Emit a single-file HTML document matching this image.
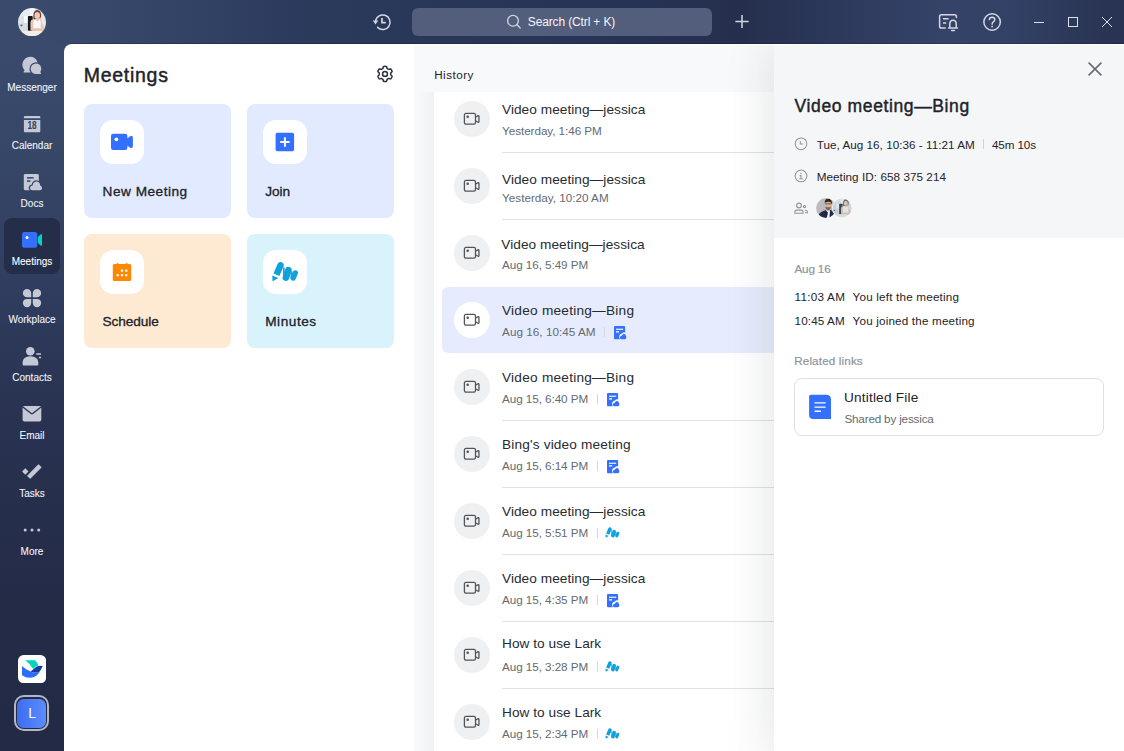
<!DOCTYPE html>
<html lang="en">
<head>
<meta charset="utf-8">
<title>Meetings</title>
<style>
*{box-sizing:border-box;margin:0;padding:0}
html,body{width:1124px;height:751px;overflow:hidden}
body{position:relative;font-family:"Liberation Sans","DejaVu Sans",sans-serif;color:#1f2329;background:#2a3557}
.abs,.tx,svg{position:absolute}
.tx{white-space:nowrap}
#bg{left:0;top:0;width:1124px;height:751px;background:linear-gradient(180deg,#3a4a6d 0%,#3a4a6d 7%,#374767 20%,#303d5f 38%,#2a3453 52%,#262f4c 66%,#232b47 80%,#222a45 100%)}
#top{left:0;top:0;width:1124px;height:44px;background:linear-gradient(90deg,rgba(58,74,109,0) 0%,rgba(58,74,109,0) 4%,#364669 12%,#2c3b5d 26%,#293758 36%,#273457 52%,#252f4d 66%,#2e3b5e 76%,#354369 84%,#334167 90%,#2c3858 96%,#283252 100%)}
.lbl{left:0;width:64px;text-align:center;font-size:10px;line-height:12px;color:#eceff6}
#act{left:4px;top:218px;width:56px;height:56px;border-radius:8px;background:#252e48}
#search{left:412px;top:8px;width:300px;height:28px;border-radius:6px;background:#535d7c}
#main{left:64px;top:44px;width:1060px;height:707px;background:#fff;border-top-left-radius:8px}
#mid{left:414px;top:44px;width:360px;height:707px;background:#f8f9fa}
#gut{left:414px;top:92px;width:20px;height:659px;background:linear-gradient(90deg,#f8f9fa 0%,#f7f8f9 25%,#f1f2f4 100%)}
#list{left:434px;top:92px;width:340px;height:659px;background:#fff}
#shade{left:414px;top:45px;width:360px;height:706px;overflow:hidden;pointer-events:none}
#shade i{position:absolute;left:360px;top:2px;width:60px;height:712px;box-shadow:0 0 50px 2px rgba(31,35,41,.13)}
#right{left:774px;top:44px;width:350px;height:707px;background:#fff}
#rhead{left:774px;top:44px;width:350px;height:194px;background:#f5f6f7}
#topline{left:72px;top:44px;width:1052px;height:1px;background:#fff}
#topdark{left:70px;top:43px;width:1054px;height:1px;background:rgba(10,16,40,.28)}
.card{width:147px;height:114px;border-radius:8px}
.ib{width:44px;height:44px;border-radius:13px;background:#fff}
.sel{left:442px;width:332px;height:66px;background:#e6ecfd;border-radius:6px 0 0 6px}
.av{left:454px;width:36px;height:36px;border-radius:50%;background:#eff0f1}
.av.w{background:#fff}
.ln{left:502px;width:272px;height:1px;background:#e1e2e5}
.bar{width:1px;height:10px;background:#d5d7da}
#fcard{left:794px;top:378px;width:310px;height:58px;border:1px solid #dee0e3;border-radius:8px;background:#fff}
</style>
</head>
<body>
<div id="bg" class="abs"></div>
<div id="top" class="abs"></div>

<svg style="left:18px;top:7.8px" width="28" height="28.4" viewBox="0 0 28 28.4">
<clipPath id="avc"><ellipse cx="14" cy="14.2" rx="14" ry="14.2"/></clipPath>
<filter id="avb" x="-10%" y="-10%" width="120%" height="120%"><feGaussianBlur stdDeviation="0.6"/></filter>
<g clip-path="url(#avc)"><g filter="url(#avb)">
<rect x="-2" y="-2" width="32" height="33" fill="#dfe6e9"/>
<rect x="-2" y="-2" width="17" height="10" fill="#e8edf0"/>
<rect x="12" y="0" width="5" height="9" fill="#f6f8fa"/>
<rect x="5.6" y="8" width="4.2" height="7.4" fill="#fafbfc"/>
<rect x="4.6" y="7.6" width="0.8" height="8" fill="#cfd6da"/>
<rect x="-2" y="15" width="12" height="8" fill="#d5dee2"/>
<rect x="2.4" y="16.6" width="2" height="1.6" fill="#59646d"/>
<rect x="23" y="2" width="7" height="21" fill="#e2e9ed"/>
<rect x="9.9" y="8" width="4.8" height="14.8" rx="0.8" fill="#16191d"/>
<path d="M15.4 10.8 Q14.4 3.2 18.6 1.9 Q23.4 1.6 23.2 8 L22.8 11 L16 11.4 Z" fill="#6a4034"/>
<ellipse cx="19.2" cy="7.5" rx="2.8" ry="3.5" fill="#ecc9b9"/>
<path d="M14.6 22.8 Q13.8 14 16.6 11.4 L22.6 11 Q25.6 13.6 25 22.8 Z" fill="#f7f7f8"/>
<path d="M18.2 10.4 L20.6 10.4 L20.8 12.6 Q19.4 13.6 18 12.4 Z" fill="#e7c1b0"/>
<path d="M12.4 15 Q12.6 11.6 15 11.6 Q15.8 12.4 15.4 15 L15.2 22.6 L12.6 22.6 Z" fill="#e9c4b3"/>
<path d="M21 10.6 Q23 8.6 23.8 10.4 Q24.2 11.6 23.2 12.6 L26.4 19.4 Q26.6 22 24.6 22.6 L22.6 21.6 L22.8 14 Z" fill="#ebc7b6"/>
<path d="M14.6 20.6 Q20 19.8 25 20.8 L25 23.2 L14.6 23.2 Z" fill="#e6bfae"/>
<rect x="-2" y="22.9" width="32" height="7" fill="#f2ede5"/>
</g></g></svg>
<div id="act" class="abs"></div>
<div id="sb0" class="tx" style="left:0.6px;top:82.00px;font-size:10px;line-height:12px;color:#f4f6fb;left:0;width:64px;text-align:center;-webkit-text-stroke:0.08px #f4f6fb;">Messenger</div>
<div id="sb1" class="tx" style="left:0.6px;top:140.00px;font-size:10px;line-height:12px;color:#f4f6fb;left:0;width:64px;text-align:center;-webkit-text-stroke:0.08px #f4f6fb;">Calendar</div>
<div id="sb2" class="tx" style="left:0.6px;top:198.00px;font-size:10px;line-height:12px;color:#f4f6fb;left:0;width:64px;text-align:center;-webkit-text-stroke:0.08px #f4f6fb;">Docs</div>
<div id="sb3" class="tx" style="left:0.6px;top:256.00px;font-size:10px;line-height:12px;color:#ffffff;left:0;width:64px;text-align:center;-webkit-text-stroke:0.08px #ffffff;">Meetings</div>
<div id="sb4" class="tx" style="left:0.6px;top:314.00px;font-size:10px;line-height:12px;color:#f4f6fb;left:0;width:64px;text-align:center;-webkit-text-stroke:0.08px #f4f6fb;">Workplace</div>
<div id="sb5" class="tx" style="left:0.6px;top:372.00px;font-size:10px;line-height:12px;color:#f4f6fb;left:0;width:64px;text-align:center;-webkit-text-stroke:0.08px #f4f6fb;">Contacts</div>
<div id="sb6" class="tx" style="left:0.6px;top:430.00px;font-size:10px;line-height:12px;color:#f4f6fb;left:0;width:64px;text-align:center;-webkit-text-stroke:0.08px #f4f6fb;">Email</div>
<div id="sb7" class="tx" style="left:0.6px;top:488.00px;font-size:10px;line-height:12px;color:#f4f6fb;left:0;width:64px;text-align:center;-webkit-text-stroke:0.08px #f4f6fb;">Tasks</div>
<div id="sb8" class="tx" style="left:0.6px;top:546.00px;font-size:10px;line-height:12px;color:#f4f6fb;left:0;width:64px;text-align:center;-webkit-text-stroke:0.08px #f4f6fb;">More</div>
<svg style="left:20px;top:54px" width="24" height="24" viewBox="20 54 24 24">
<path d="M30 56.7 A8 8 0 0 1 37.6 62.4 A6.6 6.6 0 0 0 29.5 69.3 A6.6 6.6 0 0 0 30.6 72.6 L24 72.6 Q23.2 72.6 23.6 71.8 L24.6 70.2 A8 8 0 0 1 30 56.7 Z" fill="#c5c9d5"/>
<path d="M36 63.4 A5.35 5.35 0 0 1 40.3 71.9 L41 73.3 Q41.3 74 40.6 74 L36 74 A5.3 5.3 0 0 1 36 63.4 Z" fill="#c5c9d5"/>
</svg>
<svg style="left:20px;top:112px" width="24" height="24" viewBox="20 112 24 24">
<path d="M24.9 115.9 H39.3 Q40.3 115.9 40.3 116.9 V118.2 H23.9 V116.9 Q23.9 115.9 24.9 115.9 Z" fill="#c5c9d5"/>
<path d="M23.9 120 H40.3 V131.3 Q40.3 132.3 39.3 132.3 H24.9 Q23.9 132.3 23.9 131.3 Z" fill="#c5c9d5"/>
<text x="32.1" y="129.3" font-family="Liberation Sans, sans-serif" font-size="10" font-weight="bold" text-anchor="middle" fill="#333f63" textLength="9.2" lengthAdjust="spacingAndGlyphs">18</text>
</svg>
<svg style="left:20px;top:170px" width="24" height="24" viewBox="20 170 24 24">
<path d="M25.2 173.9 H37.4 Q38.8 173.9 38.8 175.3 V181.2 Q36 179.2 33.2 181.4 Q31.6 182.8 31.8 184.4 Q29.4 184.6 28.8 187 Q28.4 189 29.6 190.2 H25.2 Q23.8 190.2 23.8 188.8 V175.3 Q23.8 173.9 25.2 173.9 Z" fill="#c5c9d5"/>
<rect x="27" y="177.1" width="6.6" height="1.5" fill="#35426a"/>
<rect x="27" y="180.3" width="3.4" height="1.5" fill="#35426a"/>
<path d="M32.4 190.3 Q30 190.2 29.9 187.9 Q30 185.7 32.6 185.5 Q32.6 183 35 181.8 Q37.4 181 39 182.6 Q40.2 183.8 40.2 185.4 Q42.1 185.9 42.1 188 Q42 190.2 39.8 190.3 Z" fill="#c5c9d5"/>
</svg>
<svg style="left:20px;top:228px" width="24" height="24" viewBox="20 228 24 24">
<rect x="22" y="232" width="15.2" height="15.8" rx="2.2" fill="#3370ff"/>
<path d="M37.8 237 L40.6 234.4 Q42 233.5 42 235 V244.8 Q42 246.3 40.6 245.4 L37.8 242.8 Z" fill="#00d6b9"/>
<circle cx="27" cy="237.6" r="1.5" fill="#fff"/>
</svg>
<svg style="left:20px;top:286px" width="24" height="24" viewBox="20 286 24 24"><g fill="#c5c9d5">
<path d="M27 289 A4.2 4.2 0 0 1 31.2 293.2 V297.3 H27 A4.15 4.15 0 0 1 27 289 Z"/>
<path d="M37 289 A4.2 4.2 0 0 0 32.8 293.2 V297.3 H37 A4.15 4.15 0 0 0 37 289 Z"/>
<path d="M27 307.2 A4.2 4.2 0 0 0 31.2 303 V298.9 H27 A4.15 4.15 0 0 0 27 307.2 Z"/>
<path d="M37 307.2 A4.2 4.2 0 0 1 32.8 303 V298.9 H37 A4.15 4.15 0 0 1 37 307.2 Z"/>
</g></svg>
<svg style="left:20px;top:344px" width="24" height="24" viewBox="20 344 24 24"><g fill="#c5c9d5">
<circle cx="30.3" cy="351.3" r="4.3"/>
<path d="M22.6 364.6 V362.6 Q22.8 356.5 30.4 356.3 Q38 356.5 38.3 362.6 V364.6 Q38.3 365.6 37.3 365.6 H23.6 Q22.6 365.6 22.6 364.6 Z"/>
<rect x="36.2" y="353.3" width="4.9" height="1.4" rx="0.5"/>
<rect x="38.8" y="356.8" width="2.3" height="1.4" rx="0.5"/>
</g></svg>
<svg style="left:20px;top:402px" width="24" height="24" viewBox="20 402 24 24">
<rect x="22.6" y="406" width="18.7" height="15.6" rx="1.8" fill="#c5c9d5"/>
<path d="M22.9 407 L31.2 413.6 Q31.95 414.2 32.7 413.6 L41 407" fill="none" stroke="#29324f" stroke-width="1.3"/>
</svg>
<svg style="left:20px;top:460px" width="24" height="24" viewBox="20 460 24 24"><g fill="#c5c9d5">
<path d="M25.3 468.3 L28.5 471.5 L25.3 474.7 L22.1 471.5 Z"/>
<path d="M38.9 464.6 L41.3 467 Q41.6 467.4 41.3 467.8 L30.6 478.6 Q30.2 478.9 29.8 478.6 L27.4 476.2 Q27.1 475.8 27.4 475.4 L38.1 464.6 Q38.5 464.3 38.9 464.6 Z"/>
</g></svg>
<svg style="left:20px;top:518px" width="24" height="24" viewBox="20 518 24 24"><g fill="#c5c9d5"><circle cx="25.2" cy="530" r="1.5"/><circle cx="32" cy="530" r="1.5"/><circle cx="38.7" cy="530" r="1.5"/></g></svg>
<svg style="left:17.9px;top:654.8px" width="28.2" height="28.2" viewBox="0 0 28.2 28.2">
<rect width="28.2" height="28.2" rx="5.6" fill="#fff"/>
<path d="M7.2 5.3 H17.2 Q19.6 7.8 20.4 10.6 Q17.2 11.4 15.2 14.1 Q12.2 8.8 7.2 5.3 Z" fill="#00d6b9"/>
<path d="M25 11.3 Q22 10 18.8 11.6 Q16.8 12.8 14.8 14.8 L12.6 16.5 Q17 18.6 20 17.4 Q22 16.4 23 14.4 Q23.8 12.4 25 11.3 Z" fill="#133c9a"/>
<path d="M4 10.9 Q8 14.8 12.6 16.5 Q17 18.6 20 17.4 Q21.6 16.6 22.6 15 Q20.8 19.8 16.6 21.8 Q10 24.2 4 20.2 Z" fill="#2a6dff"/>
</svg>
<div class="abs" style="left:14.2px;top:695.3px;width:35px;height:35.4px;border:2px solid #b3b7c3;border-radius:10px"></div>
<div class="abs" style="left:17.4px;top:698.5px;width:28.9px;height:29.1px;border-radius:6.5px;background:linear-gradient(90deg,#3d6df0,#5b8cff)"></div>
<div id="tL" class="tx" style="left:28.2px;top:703.00px;font-size:14px;line-height:20px;color:#ffffff;">L</div>
<svg style="left:370px;top:10px" width="24" height="24" viewBox="370 10 24 24"><g fill="none" stroke="#d3d7e0" stroke-width="1.5">
<path d="M377.6 27.4 A7.3 7.3 0 1 0 375.5 21.6" stroke-linecap="round"/>
<path d="M382 18 V22.6 H385.8" stroke-width="1.7"/></g>
<path d="M372.8 20.6 L378.2 20.6 L375.5 24.6 Z" fill="#d3d7e0"/>
</svg>
<div id="search" class="abs"></div>
<svg style="left:505px;top:13px" width="18" height="18" viewBox="505 13 18 18"><g fill="none" stroke="#d3d7e0" stroke-width="1.3" stroke-linecap="round"><circle cx="513" cy="20.8" r="5.4"/><path d="M517 24.8 L520.2 28"/></g></svg>
<div id="tSearch" class="tx" style="left:527.8px;top:14.00px;font-size:12px;line-height:17px;color:#f4f6fb;letter-spacing:-0.138px;">Search (Ctrl + K)</div>
<svg style="left:732px;top:11px" width="20" height="20" viewBox="732 11 20 20"><path d="M735.4 21.5 H748.6 M742 14.9 V28.1" fill="none" stroke="#d3d7e0" stroke-width="1.5"/></svg>
<svg style="left:936px;top:10px" width="24" height="24" viewBox="936 10 24 24"><g fill="none" stroke="#d3d7e0" stroke-width="1.5" stroke-linecap="round" stroke-linejoin="round">
<path d="M945.2 28 H941.4 Q939.6 28 939.6 26.2 V16.6 Q939.6 14.8 941.4 14.8 H954.6 Q956.4 14.8 956.4 16.6 V17.4"/>
<path d="M943 18.8 H948.6 M943 23 H946.2" stroke-linecap="butt"/>
<path d="M948.6 28 H957.4 M949.8 27.6 V24 Q949.8 20.2 953 20.2 Q956.2 20.2 956.2 24 V27.6 M951.6 30.6 H954.4"/>
</g></svg>
<svg style="left:980px;top:10px" width="24" height="24" viewBox="980 10 24 24"><circle cx="992.1" cy="22" r="8.25" fill="none" stroke="#d3d7e0" stroke-width="1.5"/>
<path d="M989.4 19.6 Q989.5 17.3 992.1 17.2 Q994.7 17.3 994.8 19.5 Q994.8 20.9 993.3 21.9 Q992.1 22.7 992.1 24.2" fill="none" stroke="#d3d7e0" stroke-width="1.5" stroke-linecap="round"/>
<circle cx="992.1" cy="26.6" r="0.95" fill="#d3d7e0"/></svg>
<svg style="left:1028px;top:10px" width="96" height="24" viewBox="1028 10 96 24"><g fill="none" stroke="#dde0e8" stroke-width="1"><path d="M1034 22.5 H1044"/><rect x="1068.5" y="17.5" width="9" height="9"/><path d="M1102 17 L1112 27 M1112 17 L1102 27"/></g></svg>
<div id="main" class="abs"></div><div id="mid" class="abs"></div><div id="gut" class="abs"></div><div id="list" class="abs"></div>
<div id="tH1" class="tx" style="left:83.8px;top:61.00px;font-size:19.5px;line-height:28px;color:#1f2329;-webkit-text-stroke:0.47px #1f2329;letter-spacing:0.714px;">Meetings</div>
<svg style="left:375px;top:64px" width="20" height="20" viewBox="0 0 20 20"><g fill="none" stroke="#2b2f36" stroke-width="1.5" stroke-linejoin="round">
<path d="M15.75 9.90 L15.74 10.15 L15.73 10.40 L15.71 10.65 L15.85 10.93 L16.21 11.28 L16.68 11.69 L17.03 12.12 L17.09 12.48 L16.98 12.79 L16.84 13.09 L16.70 13.39 L16.54 13.68 L16.37 13.96 L16.18 14.23 L15.99 14.50 L15.78 14.75 L15.44 14.88 L14.89 14.79 L14.30 14.59 L13.82 14.45 L13.50 14.47 L13.30 14.61 L13.09 14.75 L12.88 14.88 L12.66 15.00 L12.43 15.11 L12.20 15.22 L12.03 15.48 L11.91 15.97 L11.79 16.58 L11.60 17.10 L11.31 17.34 L10.99 17.39 L10.66 17.42 L10.33 17.44 L10.00 17.45 L9.67 17.44 L9.34 17.42 L9.01 17.39 L8.69 17.34 L8.40 17.10 L8.21 16.58 L8.09 15.97 L7.97 15.48 L7.80 15.22 L7.57 15.11 L7.34 15.00 L7.13 14.88 L6.91 14.75 L6.70 14.61 L6.50 14.47 L6.18 14.45 L5.70 14.59 L5.11 14.79 L4.56 14.88 L4.22 14.75 L4.01 14.50 L3.82 14.23 L3.63 13.96 L3.46 13.68 L3.30 13.39 L3.16 13.09 L3.02 12.79 L2.91 12.48 L2.97 12.12 L3.32 11.69 L3.79 11.28 L4.15 10.93 L4.29 10.65 L4.27 10.40 L4.26 10.15 L4.25 9.90 L4.26 9.65 L4.27 9.40 L4.29 9.15 L4.15 8.87 L3.79 8.52 L3.32 8.11 L2.97 7.68 L2.91 7.32 L3.02 7.01 L3.16 6.71 L3.30 6.41 L3.46 6.12 L3.63 5.84 L3.82 5.57 L4.01 5.30 L4.22 5.05 L4.56 4.92 L5.11 5.01 L5.70 5.21 L6.18 5.35 L6.50 5.33 L6.70 5.19 L6.91 5.05 L7.12 4.92 L7.34 4.80 L7.57 4.69 L7.80 4.58 L7.97 4.32 L8.09 3.83 L8.21 3.22 L8.40 2.70 L8.69 2.46 L9.01 2.41 L9.34 2.38 L9.67 2.36 L10.00 2.35 L10.33 2.36 L10.66 2.38 L10.99 2.41 L11.31 2.46 L11.60 2.70 L11.79 3.22 L11.91 3.83 L12.03 4.32 L12.20 4.58 L12.43 4.69 L12.66 4.80 L12.87 4.92 L13.09 5.05 L13.30 5.19 L13.50 5.33 L13.82 5.35 L14.30 5.21 L14.89 5.01 L15.44 4.92 L15.78 5.05 L15.99 5.30 L16.18 5.57 L16.37 5.84 L16.54 6.13 L16.70 6.41 L16.84 6.71 L16.98 7.01 L17.09 7.32 L17.03 7.68 L16.68 8.11 L16.21 8.52 L15.85 8.87 L15.71 9.15 L15.73 9.40 L15.74 9.65 Z"/>
<circle cx="10" cy="9.9" r="2.45"/></g></svg>
<div class="abs card" style="left:84px;top:104px;background:#e1eaff"></div>
<div class="abs ib" style="left:100px;top:120px"></div>
<div id="cNew" class="tx" style="left:102.6px;top:182.00px;font-size:13.65px;line-height:20px;color:#1f2329;-webkit-text-stroke:0.33px #1f2329;letter-spacing:0.490px;">New Meeting</div>
<div class="abs card" style="left:247px;top:104px;background:#e1eaff"></div>
<div class="abs ib" style="left:263px;top:120px"></div>
<div id="cJoin" class="tx" style="left:265.2px;top:182.00px;font-size:13.65px;line-height:20px;color:#1f2329;-webkit-text-stroke:0.33px #1f2329;">Join</div>
<div class="abs card" style="left:84px;top:234px;background:#feead2"></div>
<div class="abs ib" style="left:100px;top:250px"></div>
<div id="cSch" class="tx" style="left:102.4px;top:312.00px;font-size:13.65px;line-height:20px;color:#1f2329;-webkit-text-stroke:0.33px #1f2329;letter-spacing:-0.071px;">Schedule</div>
<div class="abs card" style="left:247px;top:234px;background:#d9f3fd"></div>
<div class="abs ib" style="left:263px;top:250px"></div>
<div id="cMin" class="tx" style="left:265.2px;top:312.00px;font-size:13.65px;line-height:20px;color:#1f2329;-webkit-text-stroke:0.33px #1f2329;letter-spacing:0.533px;">Minutes</div>
<svg style="left:108px;top:130px" width="28" height="24" viewBox="108 130 28 24">
<rect x="111" y="133.8" width="16.4" height="16.2" rx="2.2" fill="#3370ff"/>
<path d="M127 138.4 L129.8 136.4 Q132.9 134.6 132.9 138 V145.8 Q132.9 149.2 129.8 147.4 L127 145.4 Z" fill="#3370ff"/>
<circle cx="116.4" cy="139.3" r="1.85" fill="#fff"/></svg>
<svg style="left:273px;top:130px" width="24" height="24" viewBox="273 130 24 24">
<rect x="275.6" y="132.8" width="18.5" height="18.4" rx="1.8" fill="#3370ff"/>
<path d="M280.2 142 H289.6 M284.9 137.3 V146.7" stroke="#fff" stroke-width="1.9" fill="none"/></svg>
<svg style="left:110px;top:260px" width="24" height="24" viewBox="110 260 24 24">
<rect x="112.8" y="263.9" width="18.4" height="17" rx="1.5" fill="#ff8800"/>
<rect x="116.8" y="262.9" width="1.5" height="2" rx="0.5" fill="#ff8800"/><rect x="125.8" y="262.9" width="1.5" height="2" rx="0.5" fill="#ff8800"/>
<g fill="#fff"><rect x="120.85" y="269.55" width="2.3" height="2.3" rx="0.7"/><rect x="125.05" y="269.55" width="2.3" height="2.3" rx="0.7"/>
<rect x="116.6" y="274.05" width="2.3" height="2.3" rx="0.7"/><rect x="120.85" y="274.05" width="2.3" height="2.3" rx="0.7"/><rect x="125.05" y="274.05" width="2.3" height="2.3" rx="0.7"/></g></svg>
<svg style="left:269px;top:259px" width="32" height="26" viewBox="269 259 32 26"><g fill="#0fa1db" stroke="none">
<path d="M283.45 266.55 A3.2 3.2 0 0 0 277.55 264.05 L273.5 273.5 L279.4 276.05 Z"/>
<path d="M272.3 275.5 L278.3 278.1 L273.3 280.9 Q272.6 281.2 272.5 280.4 Z"/>
</g>
<g stroke="#0fa1db" stroke-linecap="round" fill="none">
<path d="M288.35 270.3 L285.95 277.5" stroke-width="6.7"/>
<path d="M295.3 272.9 L293.1 278.1" stroke-width="5.3"/>
<path d="M283.8 268 L284 277" stroke-width="1.6"/>
<path d="M291.5 272 L291.3 277.8" stroke-width="1.6"/>
</g></svg>
<div id="tHist" class="tx" style="left:434.2px;top:66.00px;font-size:11.7px;line-height:17px;color:#1f2329;letter-spacing:0.483px;">History</div>
<div class="abs av" style="top:101px"></div>
<svg style="left:463.3px;top:112.2px" width="18" height="14" viewBox="0 0 18 14"><rect x="1.4" y="1.45" width="11.1" height="10.7" rx="1.6" fill="none" stroke="#51565d" stroke-width="1.3"/><path d="M13 4.9 L15 3.7 Q15.95 3.3 15.95 4.4 V9.5 Q15.95 10.6 15 10.2 L13 9" fill="none" stroke="#51565d" stroke-width="1.3" stroke-linejoin="round"/><circle cx="4.7" cy="4.85" r="1.25" fill="#494e55"/></svg>
<div id="rt0" class="tx" style="left:502.0px;top:100.00px;font-size:13.65px;line-height:20px;color:#272b31;letter-spacing:0.050px;">Video meeting—jessica</div>
<div id="rs0" class="tx" style="left:502.1px;top:122.00px;font-size:11.7px;line-height:17px;color:#646a73;letter-spacing:-0.059px;">Yesterday, 1:46 PM</div>
<div class="abs ln" style="top:152px"></div>
<div class="abs av" style="top:168px"></div>
<svg style="left:463.3px;top:179.2px" width="18" height="14" viewBox="0 0 18 14"><rect x="1.4" y="1.45" width="11.1" height="10.7" rx="1.6" fill="none" stroke="#51565d" stroke-width="1.3"/><path d="M13 4.9 L15 3.7 Q15.95 3.3 15.95 4.4 V9.5 Q15.95 10.6 15 10.2 L13 9" fill="none" stroke="#51565d" stroke-width="1.3" stroke-linejoin="round"/><circle cx="4.7" cy="4.85" r="1.25" fill="#494e55"/></svg>
<div id="rt1" class="tx" style="left:502.0px;top:170.00px;font-size:13.65px;line-height:20px;color:#272b31;letter-spacing:0.050px;">Video meeting—jessica</div>
<div id="rs1" class="tx" style="left:502.1px;top:189.00px;font-size:11.7px;line-height:17px;color:#646a73;">Yesterday, 10:20 AM</div>
<div class="abs ln" style="top:219px"></div>
<div class="abs av" style="top:235px"></div>
<svg style="left:463.3px;top:246.2px" width="18" height="14" viewBox="0 0 18 14"><rect x="1.4" y="1.45" width="11.1" height="10.7" rx="1.6" fill="none" stroke="#51565d" stroke-width="1.3"/><path d="M13 4.9 L15 3.7 Q15.95 3.3 15.95 4.4 V9.5 Q15.95 10.6 15 10.2 L13 9" fill="none" stroke="#51565d" stroke-width="1.3" stroke-linejoin="round"/><circle cx="4.7" cy="4.85" r="1.25" fill="#494e55"/></svg>
<div id="rt2" class="tx" style="left:501.3px;top:235.00px;font-size:13.65px;line-height:20px;color:#272b31;letter-spacing:0.050px;">Video meeting—jessica</div>
<div id="rs2" class="tx" style="left:502.1px;top:256.00px;font-size:11.7px;line-height:17px;color:#646a73;letter-spacing:-0.071px;">Aug 16, 5:49 PM</div>
<div class="abs sel" style="top:287px"></div>
<div class="abs av w" style="top:302px"></div>
<svg style="left:463.3px;top:313.2px" width="18" height="14" viewBox="0 0 18 14"><rect x="1.4" y="1.45" width="11.1" height="10.7" rx="1.6" fill="none" stroke="#51565d" stroke-width="1.3"/><path d="M13 4.9 L15 3.7 Q15.95 3.3 15.95 4.4 V9.5 Q15.95 10.6 15 10.2 L13 9" fill="none" stroke="#51565d" stroke-width="1.3" stroke-linejoin="round"/><circle cx="4.7" cy="4.85" r="1.25" fill="#494e55"/></svg>
<div id="rt3" class="tx" style="left:502.0px;top:301.00px;font-size:13.65px;line-height:20px;color:#272b31;letter-spacing:0.241px;">Video meeting—Bing</div>
<div id="rs3" class="tx" style="left:502.1px;top:323.00px;font-size:11.7px;line-height:17px;color:#646a73;letter-spacing:0.033px;">Aug 16, 10:45 AM</div>
<div class="abs bar" style="left:604.4px;top:327.0px"></div>
<svg style="left:614.0px;top:325.7px" width="14" height="14" viewBox="0 0 14 14"><path d="M1 0 H10.1 Q11.1 0 11.1 1 V6.4 Q9.2 5.9 7.8 7.6 Q5.6 7.9 5.1 10 Q4.9 11.8 6 13.2 H1 Q0 13.2 0 12.2 V1 Q0 0 1 0 Z" fill="#3370ff"/><rect x="2" y="2.7" width="7.2" height="1.1" fill="#fff"/><rect x="2" y="5.1" width="3.1" height="1.5" fill="#fff" fill-opacity="0.85"/><path d="M7.3 13.2 Q5.9 13.1 5.9 11.5 Q6 9.9 7.8 9.7 Q8.4 7.8 10.1 7.9 Q11.7 8.1 11.9 9.9 Q12.5 10.5 12.3 11.7 Q12.1 13.1 10.9 13.2 Z" fill="#3370ff"/></svg>
<div class="abs av" style="top:369px"></div>
<svg style="left:463.3px;top:380.2px" width="18" height="14" viewBox="0 0 18 14"><rect x="1.4" y="1.45" width="11.1" height="10.7" rx="1.6" fill="none" stroke="#51565d" stroke-width="1.3"/><path d="M13 4.9 L15 3.7 Q15.95 3.3 15.95 4.4 V9.5 Q15.95 10.6 15 10.2 L13 9" fill="none" stroke="#51565d" stroke-width="1.3" stroke-linejoin="round"/><circle cx="4.7" cy="4.85" r="1.25" fill="#494e55"/></svg>
<div id="rt4" class="tx" style="left:502.0px;top:368.00px;font-size:13.65px;line-height:20px;color:#272b31;letter-spacing:0.241px;">Video meeting—Bing</div>
<div id="rs4" class="tx" style="left:502.1px;top:390.00px;font-size:11.7px;line-height:17px;color:#646a73;letter-spacing:-0.071px;">Aug 15, 6:40 PM</div>
<div class="abs bar" style="left:596.9px;top:394.0px"></div>
<svg style="left:606.5px;top:392.7px" width="14" height="14" viewBox="0 0 14 14"><path d="M1 0 H10.1 Q11.1 0 11.1 1 V6.4 Q9.2 5.9 7.8 7.6 Q5.6 7.9 5.1 10 Q4.9 11.8 6 13.2 H1 Q0 13.2 0 12.2 V1 Q0 0 1 0 Z" fill="#3370ff"/><rect x="2" y="2.7" width="7.2" height="1.1" fill="#fff"/><rect x="2" y="5.1" width="3.1" height="1.5" fill="#fff" fill-opacity="0.85"/><path d="M7.3 13.2 Q5.9 13.1 5.9 11.5 Q6 9.9 7.8 9.7 Q8.4 7.8 10.1 7.9 Q11.7 8.1 11.9 9.9 Q12.5 10.5 12.3 11.7 Q12.1 13.1 10.9 13.2 Z" fill="#3370ff"/></svg>
<div class="abs ln" style="top:420px"></div>
<div class="abs av" style="top:436px"></div>
<svg style="left:463.3px;top:447.2px" width="18" height="14" viewBox="0 0 18 14"><rect x="1.4" y="1.45" width="11.1" height="10.7" rx="1.6" fill="none" stroke="#51565d" stroke-width="1.3"/><path d="M13 4.9 L15 3.7 Q15.95 3.3 15.95 4.4 V9.5 Q15.95 10.6 15 10.2 L13 9" fill="none" stroke="#51565d" stroke-width="1.3" stroke-linejoin="round"/><circle cx="4.7" cy="4.85" r="1.25" fill="#494e55"/></svg>
<div id="rt5" class="tx" style="left:502.0px;top:435.00px;font-size:13.65px;line-height:20px;color:#272b31;letter-spacing:0.163px;">Bing's video meeting</div>
<div id="rs5" class="tx" style="left:502.1px;top:457.00px;font-size:11.7px;line-height:17px;color:#646a73;letter-spacing:-0.071px;">Aug 15, 6:14 PM</div>
<div class="abs bar" style="left:596.9px;top:461.0px"></div>
<svg style="left:606.5px;top:459.7px" width="14" height="14" viewBox="0 0 14 14"><path d="M1 0 H10.1 Q11.1 0 11.1 1 V6.4 Q9.2 5.9 7.8 7.6 Q5.6 7.9 5.1 10 Q4.9 11.8 6 13.2 H1 Q0 13.2 0 12.2 V1 Q0 0 1 0 Z" fill="#3370ff"/><rect x="2" y="2.7" width="7.2" height="1.1" fill="#fff"/><rect x="2" y="5.1" width="3.1" height="1.5" fill="#fff" fill-opacity="0.85"/><path d="M7.3 13.2 Q5.9 13.1 5.9 11.5 Q6 9.9 7.8 9.7 Q8.4 7.8 10.1 7.9 Q11.7 8.1 11.9 9.9 Q12.5 10.5 12.3 11.7 Q12.1 13.1 10.9 13.2 Z" fill="#3370ff"/></svg>
<div class="abs ln" style="top:487px"></div>
<div class="abs av" style="top:503px"></div>
<svg style="left:463.3px;top:514.2px" width="18" height="14" viewBox="0 0 18 14"><rect x="1.4" y="1.45" width="11.1" height="10.7" rx="1.6" fill="none" stroke="#51565d" stroke-width="1.3"/><path d="M13 4.9 L15 3.7 Q15.95 3.3 15.95 4.4 V9.5 Q15.95 10.6 15 10.2 L13 9" fill="none" stroke="#51565d" stroke-width="1.3" stroke-linejoin="round"/><circle cx="4.7" cy="4.85" r="1.25" fill="#494e55"/></svg>
<div id="rt6" class="tx" style="left:502.0px;top:502.00px;font-size:13.65px;line-height:20px;color:#272b31;letter-spacing:0.050px;">Video meeting—jessica</div>
<div id="rs6" class="tx" style="left:502.1px;top:524.00px;font-size:11.7px;line-height:17px;color:#646a73;letter-spacing:-0.071px;">Aug 15, 5:51 PM</div>
<div class="abs bar" style="left:596.9px;top:528.0px"></div>
<svg style="left:605.2px;top:527.1px" width="15" height="11.37" viewBox="271.4 261.6 27.7 21"><g fill="#0fa1db" stroke="none">
<path d="M283.45 266.55 A3.2 3.2 0 0 0 277.55 264.05 L273.5 273.5 L279.4 276.05 Z"/>
<path d="M272.3 275.5 L278.3 278.1 L273.3 280.9 Q272.6 281.2 272.5 280.4 Z"/>
</g>
<g stroke="#0fa1db" stroke-linecap="round" fill="none">
<path d="M288.35 270.3 L285.95 277.5" stroke-width="6.7"/>
<path d="M295.3 272.9 L293.1 278.1" stroke-width="5.3"/>
<path d="M283.8 268 L284 277" stroke-width="1.6"/>
<path d="M291.5 272 L291.3 277.8" stroke-width="1.6"/>
</g></svg>
<div class="abs ln" style="top:554px"></div>
<div class="abs av" style="top:570px"></div>
<svg style="left:463.3px;top:581.2px" width="18" height="14" viewBox="0 0 18 14"><rect x="1.4" y="1.45" width="11.1" height="10.7" rx="1.6" fill="none" stroke="#51565d" stroke-width="1.3"/><path d="M13 4.9 L15 3.7 Q15.95 3.3 15.95 4.4 V9.5 Q15.95 10.6 15 10.2 L13 9" fill="none" stroke="#51565d" stroke-width="1.3" stroke-linejoin="round"/><circle cx="4.7" cy="4.85" r="1.25" fill="#494e55"/></svg>
<div id="rt7" class="tx" style="left:502.0px;top:569.00px;font-size:13.65px;line-height:20px;color:#272b31;letter-spacing:0.050px;">Video meeting—jessica</div>
<div id="rs7" class="tx" style="left:502.1px;top:591.00px;font-size:11.7px;line-height:17px;color:#646a73;letter-spacing:-0.071px;">Aug 15, 4:35 PM</div>
<div class="abs bar" style="left:596.9px;top:595.0px"></div>
<svg style="left:606.5px;top:593.7px" width="14" height="14" viewBox="0 0 14 14"><path d="M1 0 H10.1 Q11.1 0 11.1 1 V6.4 Q9.2 5.9 7.8 7.6 Q5.6 7.9 5.1 10 Q4.9 11.8 6 13.2 H1 Q0 13.2 0 12.2 V1 Q0 0 1 0 Z" fill="#3370ff"/><rect x="2" y="2.7" width="7.2" height="1.1" fill="#fff"/><rect x="2" y="5.1" width="3.1" height="1.5" fill="#fff" fill-opacity="0.85"/><path d="M7.3 13.2 Q5.9 13.1 5.9 11.5 Q6 9.9 7.8 9.7 Q8.4 7.8 10.1 7.9 Q11.7 8.1 11.9 9.9 Q12.5 10.5 12.3 11.7 Q12.1 13.1 10.9 13.2 Z" fill="#3370ff"/></svg>
<div class="abs ln" style="top:621px"></div>
<div class="abs av" style="top:637px"></div>
<svg style="left:463.3px;top:648.2px" width="18" height="14" viewBox="0 0 18 14"><rect x="1.4" y="1.45" width="11.1" height="10.7" rx="1.6" fill="none" stroke="#51565d" stroke-width="1.3"/><path d="M13 4.9 L15 3.7 Q15.95 3.3 15.95 4.4 V9.5 Q15.95 10.6 15 10.2 L13 9" fill="none" stroke="#51565d" stroke-width="1.3" stroke-linejoin="round"/><circle cx="4.7" cy="4.85" r="1.25" fill="#494e55"/></svg>
<div id="rt8" class="tx" style="left:502.0px;top:634.00px;font-size:13.65px;line-height:20px;color:#272b31;letter-spacing:0.043px;">How to use Lark</div>
<div id="rs8" class="tx" style="left:502.1px;top:658.00px;font-size:11.7px;line-height:17px;color:#646a73;letter-spacing:-0.071px;">Aug 15, 3:28 PM</div>
<div class="abs bar" style="left:596.9px;top:662.0px"></div>
<svg style="left:605.2px;top:661.1px" width="15" height="11.37" viewBox="271.4 261.6 27.7 21"><g fill="#0fa1db" stroke="none">
<path d="M283.45 266.55 A3.2 3.2 0 0 0 277.55 264.05 L273.5 273.5 L279.4 276.05 Z"/>
<path d="M272.3 275.5 L278.3 278.1 L273.3 280.9 Q272.6 281.2 272.5 280.4 Z"/>
</g>
<g stroke="#0fa1db" stroke-linecap="round" fill="none">
<path d="M288.35 270.3 L285.95 277.5" stroke-width="6.7"/>
<path d="M295.3 272.9 L293.1 278.1" stroke-width="5.3"/>
<path d="M283.8 268 L284 277" stroke-width="1.6"/>
<path d="M291.5 272 L291.3 277.8" stroke-width="1.6"/>
</g></svg>
<div class="abs ln" style="top:688px"></div>
<div class="abs av" style="top:704px"></div>
<svg style="left:463.3px;top:715.2px" width="18" height="14" viewBox="0 0 18 14"><rect x="1.4" y="1.45" width="11.1" height="10.7" rx="1.6" fill="none" stroke="#51565d" stroke-width="1.3"/><path d="M13 4.9 L15 3.7 Q15.95 3.3 15.95 4.4 V9.5 Q15.95 10.6 15 10.2 L13 9" fill="none" stroke="#51565d" stroke-width="1.3" stroke-linejoin="round"/><circle cx="4.7" cy="4.85" r="1.25" fill="#494e55"/></svg>
<div id="rt9" class="tx" style="left:502.0px;top:703.00px;font-size:13.65px;line-height:20px;color:#272b31;letter-spacing:0.043px;">How to use Lark</div>
<div id="rs9" class="tx" style="left:502.1px;top:725.00px;font-size:11.7px;line-height:17px;color:#646a73;letter-spacing:-0.071px;">Aug 15, 2:34 PM</div>
<div class="abs bar" style="left:596.9px;top:729.0px"></div>
<svg style="left:605.2px;top:728.1px" width="15" height="11.37" viewBox="271.4 261.6 27.7 21"><g fill="#0fa1db" stroke="none">
<path d="M283.45 266.55 A3.2 3.2 0 0 0 277.55 264.05 L273.5 273.5 L279.4 276.05 Z"/>
<path d="M272.3 275.5 L278.3 278.1 L273.3 280.9 Q272.6 281.2 272.5 280.4 Z"/>
</g>
<g stroke="#0fa1db" stroke-linecap="round" fill="none">
<path d="M288.35 270.3 L285.95 277.5" stroke-width="6.7"/>
<path d="M295.3 272.9 L293.1 278.1" stroke-width="5.3"/>
<path d="M283.8 268 L284 277" stroke-width="1.6"/>
<path d="M291.5 272 L291.3 277.8" stroke-width="1.6"/>
</g></svg>
<div id="shade" class="abs"><i></i></div>
<div id="right" class="abs"></div><div id="rhead" class="abs"></div>
<svg style="left:1086px;top:60px" width="18" height="18" viewBox="1086 60 18 18"><path d="M1088.6 62.6 L1101.4 75.4 M1101.4 62.6 L1088.6 75.4" stroke="#646a73" stroke-width="1.5" fill="none"/></svg>
<div id="tTitle" class="tx" style="left:794.6px;top:94.00px;font-size:17.55px;line-height:25px;color:#1f2329;-webkit-text-stroke:0.42px #1f2329;letter-spacing:0.600px;">Video meeting—Bing</div>
<svg style="left:793px;top:136px" width="16" height="16" viewBox="793 136 16 16"><g fill="none" stroke="#8f959e" stroke-width="1.05"><circle cx="801" cy="143.8" r="5.85"/><path d="M800.3 140.9 V144 H803.4" stroke-linejoin="round"/></g></svg>
<div id="tTime" class="tx" style="left:816.7px;top:136.00px;font-size:11.7px;line-height:17px;color:#1f2329;letter-spacing:0.029px;">Tue, Aug 16, 10:36 - 11:21 AM</div>
<div class="abs bar" style="left:983px;top:139px;background:#d0d3d6"></div>
<div id="tDur" class="tx" style="left:991.9px;top:136.00px;font-size:11.7px;line-height:17px;color:#1f2329;letter-spacing:-0.100px;">45m 10s</div>
<svg style="left:793px;top:168px" width="16" height="16" viewBox="793 168 16 16"><g fill="none" stroke="#8f959e" stroke-width="1.05"><circle cx="801" cy="175.9" r="5.85"/><path d="M799.7 175.6 H801 V178.6 M799.3 178.7 H802.7"/></g><circle cx="800.9" cy="173.6" r="0.75" fill="#8f959e"/></svg>
<div id="tMid" class="tx" style="left:816.7px;top:168.00px;font-size:11.7px;line-height:17px;color:#1f2329;letter-spacing:0.059px;">Meeting ID: 658 375 214</div>
<svg style="left:792px;top:200px" width="18" height="16" viewBox="792 200 18 16"><g fill="none" stroke="#8f959e" stroke-width="1.1" stroke-linecap="round" stroke-linejoin="round">
<circle cx="799" cy="205.5" r="2.35"/><path d="M794.9 213.2 V212 Q794.9 210.1 796.9 210.1 H801.1 Q803.1 210.1 803.1 212 V213.2 Z"/>
<circle cx="804.5" cy="206.6" r="1.15"/><path d="M805.4 210 Q807.6 210.6 807.6 212.8 H805.6"/></g></svg>
<svg style="left:816px;top:197.8px" width="38" height="20" viewBox="0 0 38 20">
<clipPath id="pa1"><circle cx="10" cy="10" r="9.9"/></clipPath><clipPath id="pa2"><circle cx="26.1" cy="10" r="9.6"/></clipPath>
<filter id="pb" x="-10%" y="-10%" width="120%" height="120%"><feGaussianBlur stdDeviation="0.4"/></filter>
<g clip-path="url(#pa1)"><g filter="url(#pb)"><rect x="-1" y="-1" width="22" height="22" fill="#bcbcbc"/>
<path d="M8.8 5 Q8.4 1 12 0.8 Q15.8 0.8 15.8 4.4 L15.6 6 L9 6 Z" fill="#35271f"/>
<path d="M9.3 4.4 Q12 3 14.8 4.2 L14.8 9 Q14.4 12 12.2 12.2 Q9.8 12 9.3 9 Z" fill="#dcb69f"/>
<path d="M9.4 8.6 Q12 10 14.8 8.4 L14.6 10 Q14 12.2 12.2 12.4 Q10.2 12.2 9.6 10 Z" fill="#8a6450"/>
<path d="M9.4 5.9 H14.8" stroke="#3a2e2a" stroke-width="0.7" fill="none"/>
<path d="M1 21 Q2 14.6 8.6 12.6 L10 12 L14.4 12 L15.6 12.6 Q19 13.6 20 21 Z" fill="#222b4d"/>
<path d="M9.6 12.2 L14 12.2 L13.4 20.5 L10.2 20.5 Z" fill="#f4f4f4"/>
<path d="M9.6 12.2 L12 14.4 L10.6 20.5 L8.4 14 Z" fill="#1d2544"/>
</g></g>
<circle cx="26.1" cy="10" r="10.2" fill="#f5f6f7"/>
<g clip-path="url(#pa2)"><g filter="url(#pb)"><g transform="translate(16.1 0) scale(0.7143)"><rect x="-2" y="-2" width="32" height="33" fill="#dfe6e9"/>
<rect x="-2" y="-2" width="17" height="10" fill="#e8edf0"/>
<rect x="12" y="0" width="5" height="9" fill="#f6f8fa"/>
<rect x="5.6" y="8" width="4.2" height="7.4" fill="#fafbfc"/>
<rect x="4.6" y="7.6" width="0.8" height="8" fill="#cfd6da"/>
<rect x="-2" y="15" width="12" height="8" fill="#d5dee2"/>
<rect x="2.4" y="16.6" width="2" height="1.6" fill="#59646d"/>
<rect x="23" y="2" width="7" height="21" fill="#e2e9ed"/>
<rect x="9.9" y="8" width="4.8" height="14.8" rx="0.8" fill="#16191d"/>
<path d="M15.4 10.8 Q14.4 3.2 18.6 1.9 Q23.4 1.6 23.2 8 L22.8 11 L16 11.4 Z" fill="#6a4034"/>
<ellipse cx="19.2" cy="7.5" rx="2.8" ry="3.5" fill="#ecc9b9"/>
<path d="M14.6 22.8 Q13.8 14 16.6 11.4 L22.6 11 Q25.6 13.6 25 22.8 Z" fill="#f7f7f8"/>
<path d="M18.2 10.4 L20.6 10.4 L20.8 12.6 Q19.4 13.6 18 12.4 Z" fill="#e7c1b0"/>
<path d="M12.4 15 Q12.6 11.6 15 11.6 Q15.8 12.4 15.4 15 L15.2 22.6 L12.6 22.6 Z" fill="#e9c4b3"/>
<path d="M21 10.6 Q23 8.6 23.8 10.4 Q24.2 11.6 23.2 12.6 L26.4 19.4 Q26.6 22 24.6 22.6 L22.6 21.6 L22.8 14 Z" fill="#ebc7b6"/>
<path d="M14.6 20.6 Q20 19.8 25 20.8 L25 23.2 L14.6 23.2 Z" fill="#e6bfae"/>
<rect x="-2" y="22.9" width="32" height="7" fill="#f2ede5"/></g><circle cx="26.1" cy="10" r="10" fill="#9fb2ba" fill-opacity="0.28"/></g></g></svg>
<div id="tAug" class="tx" style="left:794.5px;top:260.00px;font-size:11.7px;line-height:17px;color:#8f959e;letter-spacing:-0.180px;-webkit-text-stroke:0.2px #8f959e;">Aug 16</div>
<div id="tT1" class="tx" style="left:794.5px;top:288.00px;font-size:11.7px;line-height:17px;color:#1f2329;letter-spacing:0.271px;">11:03 AM</div>
<div id="tE1" class="tx" style="left:852.6px;top:288.00px;font-size:11.7px;line-height:17px;color:#1f2329;letter-spacing:0.184px;">You left the meeting</div>
<div id="tT2" class="tx" style="left:794.5px;top:312.00px;font-size:11.7px;line-height:17px;color:#1f2329;letter-spacing:0.129px;">10:45 AM</div>
<div id="tE2" class="tx" style="left:852.6px;top:312.00px;font-size:11.7px;line-height:17px;color:#1f2329;letter-spacing:0.167px;">You joined the meeting</div>
<div id="tRel" class="tx" style="left:794.2px;top:352.00px;font-size:11.7px;line-height:17px;color:#8f959e;letter-spacing:0.133px;-webkit-text-stroke:0.2px #8f959e;">Related links</div>
<div id="fcard" class="abs"></div>
<svg style="left:808px;top:394px" width="24" height="26" viewBox="808 394 24 26">
<path d="M810.9 394.7 H826 Q831 394.7 831 399.7 V418.9 H813.1 Q809.1 418.9 809.1 414.9 V396.5 Q809.1 394.7 810.9 394.7 Z" fill="#3370ff"/>
<path d="M814.5 402.9 H825.6 M814.5 407.1 H825.6 M814.5 411.3 H821" stroke="#fff" stroke-width="1.4" fill="none"/></svg>
<div id="tFile" class="tx" style="left:843.9px;top:388.00px;font-size:13.65px;line-height:20px;color:#1f2329;letter-spacing:0.192px;">Untitled File</div>
<div id="tShare" class="tx" style="left:844.4px;top:410.00px;font-size:11.7px;line-height:17px;color:#646a73;letter-spacing:-0.175px;">Shared by jessica</div>
<div id="topline" class="abs"></div><div id="topdark" class="abs"></div>
</body>
</html>
